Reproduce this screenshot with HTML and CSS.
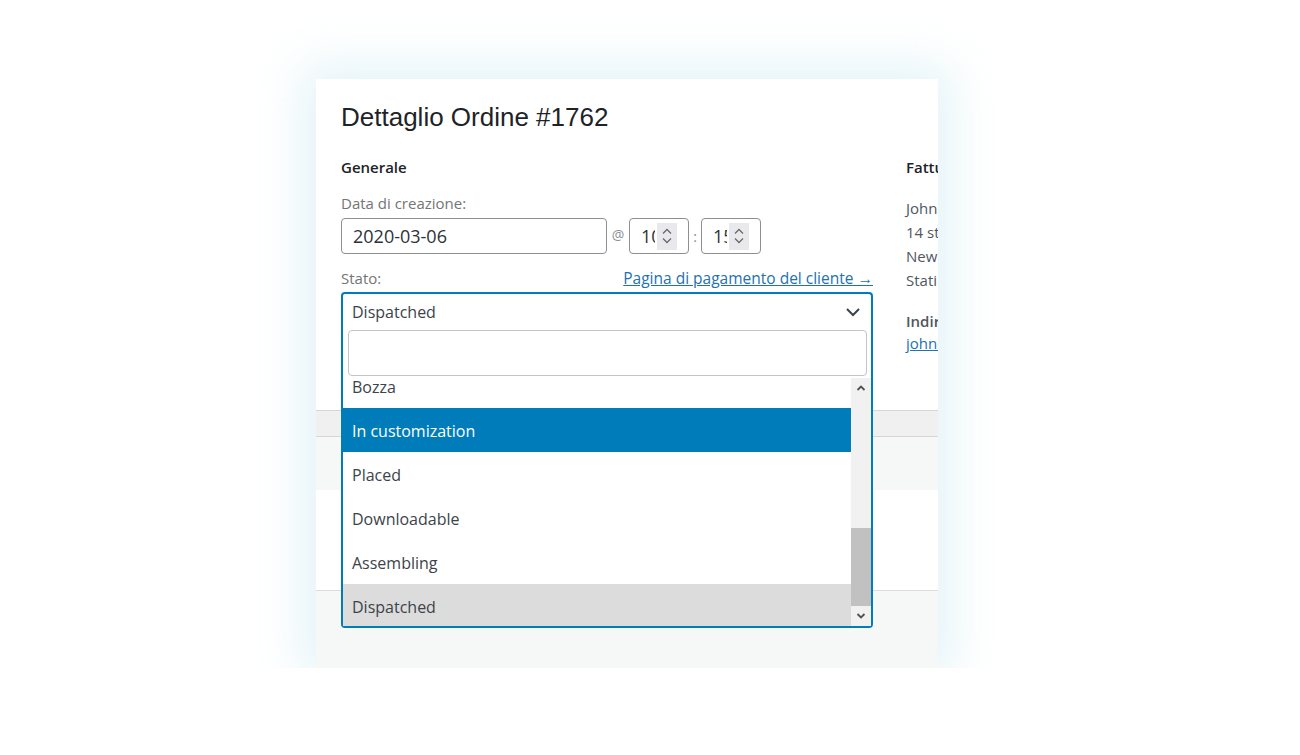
FILE: index.html
```html
<!DOCTYPE html>
<html>
  <head>
    <meta name="viewport" content="width=device-width, initial-scale=1.0">
    <title>Dettaglio Ordine #1762</title>
    <link rel="stylesheet" href="styles.css">
  </head>

  <body>
    <div class="stage">
      <div class="card">

        <!-- Order details panel -->
        <div class="panel">
          <h2 class="title">Dettaglio Ordine #1762</h2>

          <div class="columns">
            <div class="col-general">
              <h3 class="col-head">Generale</h3>

              <label class="field-label">Data di creazione:</label>
              <div class="date-row">
                <div class="input date-input">2020-03-06</div>
                <span class="sep at">@</span>
                <div class="input time-input">
                  <span class="num">10</span>
                  <span class="spin">
                    <svg width="12" height="20" viewBox="0 0 12 20"><path d="M2 7.5 L6 3.5 L10 7.5 M2 12.5 L6 16.5 L10 12.5" fill="none" stroke="#6b6b6b" stroke-width="1.3"/></svg>
                  </span>
                </div>
                <span class="sep colon">:</span>
                <div class="input time-input">
                  <span class="num">15</span>
                  <span class="spin">
                    <svg width="12" height="20" viewBox="0 0 12 20"><path d="M2 7.5 L6 3.5 L10 7.5 M2 12.5 L6 16.5 L10 12.5" fill="none" stroke="#6b6b6b" stroke-width="1.3"/></svg>
                  </span>
                </div>
              </div>

              <div class="status-head">
                <label class="field-label">Stato:</label>
                <a class="link pay-link" href="#">Pagina di pagamento del cliente &rarr;</a>
              </div>

              <!-- Open status select -->
              <div class="select">
                <div class="selection">
                  <span>Dispatched</span>
                  <svg width="16" height="10" viewBox="0 0 16 10"><path d="M2 2 L8 8 L14 2" fill="none" stroke="#3c434a" stroke-width="2"/></svg>
                </div>
                <div class="dropdown">
                  <div class="search"><div class="search-field"></div></div>
                  <div class="results">
                    <ul class="options">
                      <li>Bozza</li>
                      <li class="active">In customization</li>
                      <li>Placed</li>
                      <li>Downloadable</li>
                      <li>Assembling</li>
                      <li class="selected">Dispatched</li>
                    </ul>
                    <div class="scrollbar">
                      <div class="arrow">
                        <svg width="10" height="8" viewBox="0 0 10 8"><path d="M1.5 6 L5 2.5 L8.5 6" fill="none" stroke="#505050" stroke-width="1.8"/></svg>
                      </div>
                      <div class="track"><div class="thumb"></div></div>
                      <div class="arrow">
                        <svg width="10" height="8" viewBox="0 0 10 8"><path d="M1.5 2 L5 5.5 L8.5 2" fill="none" stroke="#505050" stroke-width="1.8"/></svg>
                      </div>
                    </div>
                  </div>
                </div>
              </div>
            </div>

            <div class="col-billing">
              <h3 class="col-head">Fatturazione</h3>
              <p class="address">John Doe<br>14 street name<br>New York<br>Stati Uniti (USA)</p>
              <p class="meta-label">Indirizzo email:</p>
              <a class="link" href="#">john@example.com</a>
            </div>
          </div>
        </div>

        <!-- Lower boxes behind the dropdown -->
        <div class="band-grey"></div>
        <div class="band-light"></div>
        <div class="band-white"></div>
        <div class="band-foot"></div>
      </div>
    </div>
  </body>
</html>
```

FILE: styles.css
```css
/* Page */
body {
  margin: 0;
  background: #fff;
  font-family: 'Open Sans', 'Noto Sans', sans-serif;
  color: #3c434a;
}

.stage {
  padding: 79px 0 0 316px;
}

/* Card with soft glow */
.card {
  position: relative;
  width: 622px;
  height: 589px;
  overflow: hidden;
  background: #fff;
  box-shadow: 0 0 45px 12px rgba(190, 228, 240, 0.45);
}

.panel {
  box-sizing: border-box;
  height: 331px;
  padding: 23px 25px 0;
}

.title {
  margin: 0;
  font-family: 'Liberation Sans', Arial, sans-serif;
  font-weight: 400;
  font-size: 26px;
  line-height: 30px;
  color: #1d2327;
}

.columns {
  display: flex;
  gap: 33px;
  margin-top: 25px;
}

.col-general {
  flex: 0 0 532px;
}

.col-billing {
  flex: 0 0 200px;
  white-space: nowrap;
}

.col-head {
  margin: 0 0 16px;
  font-size: 15px;
  line-height: 20px;
  font-weight: 600;
  color: #1d2327;
}

.col-billing .col-head {
  margin-bottom: 19px;
}

.field-label {
  display: block;
  font-size: 15px;
  line-height: 20px;
  color: #757575;
}

/* Date / time row */
.date-row {
  display: flex;
  align-items: center;
  margin: 5px 0 14px;
}

.input {
  box-sizing: border-box;
  height: 36px;
  border: 1px solid #8c8f94;
  border-radius: 4px;
  background: #fff;
  font-size: 18px;
  color: #2c3338;
  display: flex;
  align-items: center;
}

.date-input {
  width: 266px;
  padding-left: 11px;
}

.time-input {
  width: 60px;
  padding-left: 11px;
}

.time-input .num {
  width: 14px;
  overflow: hidden;
  white-space: nowrap;
}

.spin {
  display: flex;
  align-items: center;
  justify-content: center;
  width: 20px;
  height: 27px;
  margin-left: 2px;
  background: #e9e9ed;
}

.sep {
  color: #8c8f94;
  font-size: 14px;
}

.at {
  width: 22px;
  text-align: center;
  margin-bottom: 4px;
}

.colon {
  width: 12px;
  text-align: center;
}

/* Status header */
.status-head {
  display: flex;
  justify-content: space-between;
  align-items: center;
  margin-bottom: 4px;
}

.link {
  font-size: 15px;
  line-height: 20px;
  color: #2271b1;
  text-decoration: underline;
}

.pay-link {
  font-size: 15.5px;
}

/* Open select */
.select {
  position: relative;
  z-index: 2;
}

.selection {
  box-sizing: border-box;
  height: 34px;
  padding: 3px 10px 0 9px;
  border: 2px solid #007cba;
  border-bottom: none;
  border-radius: 4px 4px 0 0;
  background: #fff;
  display: flex;
  align-items: center;
  justify-content: space-between;
  font-size: 16px;
  color: #3c434a;
}

.dropdown {
  position: absolute;
  top: 100%;
  left: 0;
  right: 0;
  background: #fff;
  border: 2px solid #007cba;
  border-top: none;
  border-radius: 0 0 4px 4px;
}

.search {
  padding: 4px 4px 2px 5px;
}

.search-field {
  height: 44px;
  border: 1px solid #c3c4c7;
  border-radius: 4px;
}

.results {
  display: flex;
  height: 248px;
  overflow: hidden;
}

.options {
  flex: 1;
  list-style: none;
  margin: -14px 0 0;
  padding: 0;
}

.options li {
  height: 44px;
  line-height: 46px;
  padding-left: 9px;
  font-size: 16px;
  color: #3c434a;
}

.options li.active {
  background: #007cba;
  color: #fff;
}

.options li.selected {
  background: #dcdcdc;
}

/* Drawn scrollbar */
.scrollbar {
  width: 20px;
  display: flex;
  flex-direction: column;
  background: #f1f1f1;
}

.arrow {
  height: 20px;
  display: flex;
  align-items: center;
  justify-content: center;
}

.track {
  flex: 1;
  display: flex;
  flex-direction: column;
  justify-content: flex-end;
}

.thumb {
  height: 78px;
  background: #c1c1c1;
}

/* Billing column */
.address {
  margin: 0 0 18px;
  font-size: 15px;
  line-height: 24px;
  color: #50575e;
}

.meta-label {
  margin: 0;
  font-size: 15px;
  line-height: 22px;
  font-weight: 600;
  color: #50575e;
}

/* Lower boxes */
.band-grey {
  height: 25px;
  background: #f0f0f1;
  border-top: 1px solid #d6d6d6;
  border-bottom: 1px solid #d6d6d6;
}

.band-light {
  height: 53px;
  background: #f6f7f7;
}

.band-white {
  height: 100px;
  background: #fff;
}

.band-foot {
  height: 78px;
  background: #f6f7f7;
  border-top: 1px solid #dcdcde;
}
```
